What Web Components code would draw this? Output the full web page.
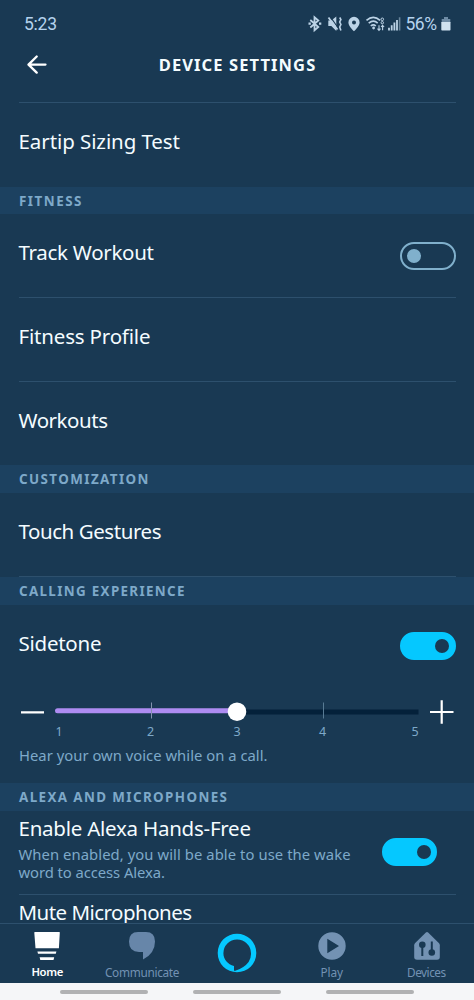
<!DOCTYPE html>
<html lang="en">
<head>
<meta charset="utf-8">
<title>Device Settings</title>
<style>
html,body{margin:0;padding:0;height:1000px;overflow:hidden;background:#193953}
body{font-family:"Noto Sans","Open Sans",sans-serif;color:#f4fcff}
</style>
</head>
<body>
<alexa-app></alexa-app>
<script>
const define = (name, html, setup) => customElements.define(name, class extends HTMLElement {
  connectedCallback() {
    if (this.shadowRoot) return;
    const t = document.createElement('template');
    t.innerHTML = html;
    this.attachShadow({ mode: 'open' }).append(t.content.cloneNode(true));
    if (setup) setup(this, this.shadowRoot);
  }
});

/* One line of text tracked to a given measure. */
define('fit-text', `<style>:host{display:block;white-space:nowrap;width:max-content}span{display:inline-block;white-space:nowrap}</style><span><slot></slot></span>`,
  (el, root) => {
    const span = root.querySelector('span');
    const n = el.textContent.length;
    const want = parseFloat(el.getAttribute('measure'));
    const have = span.getBoundingClientRect().width;
    const gap = (want - have) / (n - 1);
    span.style.letterSpacing = gap.toFixed(3) + 'px';
    span.style.marginRight = (-gap).toFixed(3) + 'px';
  });

define('status-bar', `<style>
:host{display:flex;height:42px;box-sizing:border-box;padding:6px 23px 0 24px;justify-content:space-between;align-items:center;color:#b5d3ee;font:17.5px/24px Roboto,sans-serif}
svg{display:block}.r{display:flex;align-items:center}.pct{margin-left:5px;font-size:17.5px}
</style>
<fit-text measure="33">5:23</fit-text>
<div class="r">
<svg width="93" height="20" viewBox="307 14 93 20" fill="none" stroke="#bcd3e6" stroke-width="1.8">
<path d="M309.300 20l8 7-3.800 3.200V17.300l3.800 3.200-8 7"/><path d="M307.500 23.7h2.300M318 23.7h2.300" stroke-width="2.2"/>
<path d="M327.3 20.500h3l5-4v14.500l-5-5h-3z" fill="#bcd3e6" stroke="none"/><path d="M328.800 16l9 13" stroke="#193953" stroke-width="1.2"/><path d="M327.5 17.5l9 12"/>
<path d="M338.700 17.5l1.200 2-1.200 2.5 1.200 2.5-1.200 2.5 1.200 3.5" stroke-width="1.6"/>
<path fill="#bcd3e6" stroke="none" fill-rule="evenodd" d="M353 16.8a5.6 5.6 0 0 1 5.6 5.6c0 3.8-5.6 8.8-5.6 8.8s-5.6-5-5.6-8.800a5.6 5.6 0 0 1 5.6-5.600zm0 3.600a2 2 0 1 0 0 4 2 2 0 0 0 0-4z"/>
<path d="M365.500 20.300q6.800-6 13.600 0M367.700 23.200q4.800-4 9 0M369.800 26q2.600-2.200 5 0" stroke-width="1.6"/><circle cx="372.600" cy="28" r="1.400" fill="#bcd3e6" stroke="none"/>
<circle cx="381.300" cy="19.300" r="1.300" stroke-width="1"/><circle cx="381.300" cy="22.700" r="1.200" stroke-width="1"/><path d="M378 25.300v5M376.500 28.600l1.500 1.700 1.500-1.700M381.600 30.300v-5M380.100 27l1.500-1.700 1.500 1.700" stroke-width="1.100"/>
<path d="M388 30.500v-2.800M390.700 30.500v-5.200M393.400 30.500v-8"/><path d="M396 30.500v-10.500"/><path d="M398.600 30.500V17.300" stroke-width="1.600" opacity=".5"/>
</svg>
<fit-text class="pct" measure="31.5">56%</fit-text>
<svg style="margin-left:4px" width="10" height="16" viewBox="0 0 10 16"><path fill="#6e8ba5" d="M3 1h4v2h2.300v4H.700V3H3z"/><path fill="#d0e2f0" d="M.3 6h9.200v7.700q0 .8-.8.8H1.100q-.8 0-.8-.8z"/></svg>
</div>`);

define('page-header', `<style>
:host{display:grid;grid-template-columns:1fr auto 1fr;height:60px;align-items:start;padding:0 19px;font-weight:700;font-size:16.5px;line-height:24px}
svg{display:block;margin:12px 0 0 8px}::slotted(fit-text){margin-top:11px}
</style>
<svg width="21" height="21" viewBox="0 0 21 21" fill="none" stroke="#fff" stroke-width="2.3" stroke-linecap="round" stroke-linejoin="round"><path d="M18.500 10.600H1.500M9.700 2.500L1.500 10.600l8.200 8"/></svg>
<slot></slot><span></span>`);

define('section-band', `<style>
:host{display:block;height:27px;box-sizing:border-box;padding-top:1px;background:#1c4160;padding-left:19px;color:#7ea9c9;font-size:13.400px;line-height:27px;font-weight:700}
</style><slot></slot>`);

define('setting-row', `<style>
:host{display:flex;justify-content:space-between;height:84px;box-sizing:border-box;margin:0 18.5px;padding-top:24px;font-size:20.500px;line-height:28px}
:host([rule]){border-bottom:1px solid #2d506d}
::slotted(toggle-switch){margin-top:4px}
</style><slot></slot>`);

define('toggle-switch', `<style>
:host{display:block;width:56px;height:28px;box-sizing:border-box;border:2px solid #80b0cc;border-radius:14px;padding:5px}
i{display:block;width:14px;height:14px;border-radius:50%;background:#80b0cc}
:host([on]){background:#05c8ff;border-color:#05c8ff}
:host([on]) i{background:#193953;margin-left:28px}
</style><i></i>`);

define('level-slider', `<style>
:host{display:block;margin:0 19px}
svg{display:block}
</style>
<svg width="436" height="45" viewBox="19 698 436 45">
<path d="M21 712.300h23M430 712h23.500M441.700 700.300v23.500" stroke="#fff" stroke-width="2.200"/>
<path d="M237 712h181.500" stroke="#04213a" stroke-width="5"/>
<path d="M57.500 710.700H237" stroke="#ae8cf2" stroke-width="5" stroke-linecap="round"/>
<path d="M151.500 702.500v16" stroke="#8592b0"/><path d="M323.500 702.500v16" stroke="#587b94"/>
<circle cx="237" cy="711.700" r="9.300" fill="#fff"/>
<g fill="#7ea9c9" font-family="Noto Sans, sans-serif" font-size="12.500" text-anchor="middle"><text x="59" y="736">1</text><text x="150.700" y="736">2</text><text x="237" y="736">3</text><text x="322.700" y="736">4</text><text x="415" y="736">5</text></g></svg>`);

define('tab-item', `<style>
:host{display:flex;flex-direction:column;align-items:center;width:94.800px;color:#7392b3;font-size:11.800px;line-height:16px}
:host([active]){color:#fff;font-weight:600}
.i{height:40px;display:flex;align-items:center}
</style><div class="i"><slot name="icon"></slot></div><slot></slot>`);

define('tab-bar', `<style>
:host{display:flex;height:60px;box-sizing:border-box;border-top:1px solid #2d506d;background:#193953}
svg{display:block}
</style>
<tab-item active><svg slot="icon" width="28" height="30" viewBox="0 0 28 30" style="margin-top:4px"><path fill="#fff" d="M1.800 1h24.500q.6 0 .5.700l-.9 15.500H2.500L1.300 1.700q0-.7.5-.7zM4.400 20.500h19l-.6 2.300H5zM6.600 26.300h14.600l-.7 2.600H7.300z"/></svg><fit-text measure="32" style="font-size:11.300px">Home</fit-text></tab-item>
<tab-item><svg slot="icon" width="28" height="30" viewBox="0 0 28 30" style="margin-top:4px"><path fill="#6786a9" d="M10 1h8q9 0 9 9.500 0 12-12 18V21h-4Q1 21 1 10.500 1 1 10 1z"/></svg><fit-text measure="74.5">Communicate</fit-text></tab-item>
<tab-item><svg slot="icon" width="40" height="40" viewBox="0 0 40 40" style="margin-top:17px"><path fill="#05c8ff" fill-rule="evenodd" d="M20 .700a19.300 19.300 0 1 1 0 38.600 19.300 19.300 0 0 1 0-38.600zM20 6.600A13.600 13.600 0 0 0 6.400 20.200c0 6.200 4.300 11 10.600 12.800v4.800h1.300q9-3 13.300-8.800A15 15 0 0 0 34 20.200 13.800 13.800 0 0 0 20 6.600z"/></svg></tab-item>
<tab-item><svg slot="icon" width="28" height="28" viewBox="0 0 28 28" style="margin-top:3px"><path fill="#7392b3" fill-rule="evenodd" d="M14 .3a13.700 13.700 0 1 1 0 27.400A13.700 13.700 0 0 1 14 .3zM9.300 6.800v14.500L21 14z"/></svg><fit-text measure="22.5">Play</fit-text></tab-item>
<tab-item><svg slot="icon" width="28" height="30" viewBox="0 0 28 30" style="margin-top:4px"><path fill="#7392b3" d="M12.900 1.500q1.100-.9 2.200 0L25.800 12q1 1 1 2.200V26q0 2.800-2.800 2.800H4Q1.200 28.800 1.200 26V14.200q0-1.200 1-2.200z"/><g fill="none" stroke="#193953" stroke-width="2"><path d="M9.300 14v11M18.800 10.500v10"/></g><g fill="#193953"><circle cx="9.300" cy="13.800" r="3.300"/><circle cx="18.800" cy="21.500" r="3.300"/></g></svg><fit-text measure="39">Devices</fit-text></tab-item>`);

define('gesture-bar', `<style>
:host{display:flex;height:17px;background:#f5f6f8;justify-content:center;gap:44.300px;padding-top:7px;box-sizing:border-box}
i{width:88.700px;height:3.600px;border-radius:2px;background:#b0b1b3}
</style><i></i><i></i><i></i>`);

define('alexa-app', `<style>
:host{display:flex;flex-direction:column;width:474px;height:1000px;background:#193953;overflow:hidden}
main{height:821px;overflow:hidden}
hr{border:0;height:1px;background:#2d506d;margin:0 18.500px}
.hint{color:#7ea9c9;font-size:14.800px;line-height:20px;margin-left:19px}
.ah{display:flex;justify-content:space-between;height:83px;padding:0 37px 0 18.500px}
.ah toggle-switch{margin-top:27px;width:55.500px}.title{font-size:20.500px;line-height:28px}
.ah .title{margin-top:2.500px}.ah .hint{margin-left:0;line-height:18.300px}.ah .hint:nth-child(2){margin-top:3.500px}
.mute{margin:4px 0 0 18.500px;line-height:26px}
</style>
<status-bar></status-bar>
<page-header><fit-text measure="156.5">DEVICE SETTINGS</fit-text></page-header>
<main>
<hr>
<setting-row><fit-text measure="161.5">Eartip Sizing Test</fit-text></setting-row>
<section-band><fit-text measure="62.5">FITNESS</fit-text></section-band>
<setting-row rule><fit-text measure="135.5">Track Workout</fit-text><toggle-switch></toggle-switch></setting-row>
<setting-row rule><fit-text measure="132">Fitness Profile</fit-text></setting-row>
<setting-row style="height:83px"><fit-text measure="89.5">Workouts</fit-text></setting-row>
<section-band style="height:28px"><fit-text measure="129.500">CUSTOMIZATION</fit-text></section-band>
<setting-row rule><fit-text measure="143">Touch Gestures</fit-text></setting-row>
<section-band style="height:28px"><fit-text measure="165.500">CALLING EXPERIENCE</fit-text></section-band>
<setting-row style="height:93px"><fit-text measure="83">Sidetone</fit-text><toggle-switch on style="margin-top:3px"></toggle-switch></setting-row>
<level-slider style="height:47px"></level-slider>
<fit-text class="hint" measure="248.500">Hear your own voice while on a call.</fit-text>
<section-band style="margin-top:18px;height:28px"><fit-text measure="208">ALEXA AND MICROPHONES</fit-text></section-band>
<div class="ah"><div><fit-text class="title" measure="232.500">Enable Alexa Hands-Free</fit-text>
<fit-text class="hint" measure="332">When enabled, you will be able to use the wake</fit-text>
<fit-text class="hint" measure="146.500">word to access Alexa.</fit-text></div><toggle-switch on></toggle-switch></div>
<hr>
<fit-text class="title mute" measure="173.500">Mute Microphones</fit-text>
</main>
<tab-bar></tab-bar>
<gesture-bar></gesture-bar>`);
</script>
</body>
</html>
